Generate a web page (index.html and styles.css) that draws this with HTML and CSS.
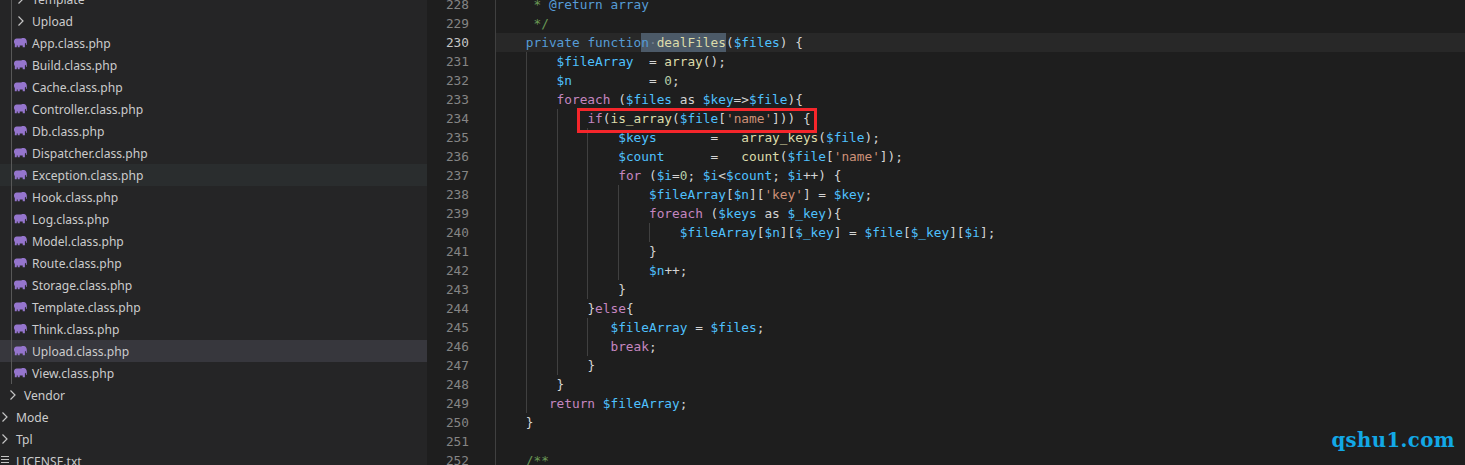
FILE: index.html
```html
<!DOCTYPE html>
<html lang="en">
<head>
<meta charset="utf-8">
<title>Upload.class.php</title>
<link rel="stylesheet" href="styles.css">
</head>
<body>
<svg class="defs" width="0" height="0" aria-hidden="true">
  <symbol id="elephant" viewBox="0 0 13 10">
    <path d="M2.6.4h4.6c.9-.6 2.900-.7 4 0 1 .7 1.600 1.900 1.600 3.300v2.800c0 .5-.8.5-.9 0V4.800l-1 .6v3.900H8.700V7.400H5.700v1.900H3.700V7.400H2.800v1.900H.8V6C.3 5.300-.1 4.300 0 3.200.1 1.600 1.200.4 2.600.4z"/>
  </symbol>
  <symbol id="chev" viewBox="0 0 16 16">
    <path d="M2.500 3.500L7 8l-4.500 4.500" fill="none" stroke="#c5c5c5" stroke-width="1.200"/>
  </symbol>
</svg>
<div class="app">
  <aside class="tree">
    <div class="row d2 guide"><svg class="chev"><use href="#chev"/></svg><span>Template</span></div>
    <div class="row d2 guide"><svg class="chev"><use href="#chev"/></svg><span>Upload</span></div>
    <div class="row file guide"><svg class="php"><use href="#elephant"/></svg><span>App.class.php</span></div>
    <div class="row file guide"><svg class="php"><use href="#elephant"/></svg><span>Build.class.php</span></div>
    <div class="row file guide"><svg class="php"><use href="#elephant"/></svg><span>Cache.class.php</span></div>
    <div class="row file guide"><svg class="php"><use href="#elephant"/></svg><span>Controller.class.php</span></div>
    <div class="row file guide"><svg class="php"><use href="#elephant"/></svg><span>Db.class.php</span></div>
    <div class="row file guide"><svg class="php"><use href="#elephant"/></svg><span>Dispatcher.class.php</span></div>
    <div class="row file guide hover"><svg class="php"><use href="#elephant"/></svg><span>Exception.class.php</span></div>
    <div class="row file guide"><svg class="php"><use href="#elephant"/></svg><span>Hook.class.php</span></div>
    <div class="row file guide"><svg class="php"><use href="#elephant"/></svg><span>Log.class.php</span></div>
    <div class="row file guide"><svg class="php"><use href="#elephant"/></svg><span>Model.class.php</span></div>
    <div class="row file guide"><svg class="php"><use href="#elephant"/></svg><span>Route.class.php</span></div>
    <div class="row file guide"><svg class="php"><use href="#elephant"/></svg><span>Storage.class.php</span></div>
    <div class="row file guide"><svg class="php"><use href="#elephant"/></svg><span>Template.class.php</span></div>
    <div class="row file guide"><svg class="php"><use href="#elephant"/></svg><span>Think.class.php</span></div>
    <div class="row file guide active"><svg class="php"><use href="#elephant"/></svg><span>Upload.class.php</span></div>
    <div class="row file guide"><svg class="php"><use href="#elephant"/></svg><span>View.class.php</span></div>
    <div class="row d1"><svg class="chev"><use href="#chev"/></svg><span>Vendor</span></div>
    <div class="row d0"><svg class="chev"><use href="#chev"/></svg><span>Mode</span></div>
    <div class="row d0"><svg class="chev"><use href="#chev"/></svg><span>Tpl</span></div>
    <div class="row d0"><svg class="txt" viewBox="0 0 16 16"><path d="M1 3.500h8M1 6.500h8M1 9.500h8M1 12.500h6" stroke="#c5c5c5" stroke-width="1"/></svg><span>LICENSE.txt</span></div>
  </aside>
  <main class="editor">
    <div class="line"><span class="num">228</span><span class="code"><i class="g"></i><span class="c"> * </span><span class="k">@return</span> <span class="k">array</span></span></div>
    <div class="line"><span class="num">229</span><span class="code"><i class="g"></i><span class="c"> */</span></span></div>
    <div class="line current"><span class="num">230</span><span class="code"><i class="g"></i><span class="k">private</span> <span class="k">functio</span><span class="sel"><span class="k">n</span><span class="ws">·</span><span class="f">dealFiles</span></span>(<span class="v">$files</span>) {</span></div>
    <div class="line"><span class="num">231</span><span class="code"><i class="g"></i><i class="g"></i><span class="v">$fileArray</span>  = <span class="f">array</span>();</span></div>
    <div class="line"><span class="num">232</span><span class="code"><i class="g"></i><i class="g"></i><span class="v">$n</span>          = <span class="n">0</span>;</span></div>
    <div class="line"><span class="num">233</span><span class="code"><i class="g"></i><i class="g"></i><span class="p">foreach</span> (<span class="v">$files</span> as <span class="v">$key</span>=&gt;<span class="v">$file</span>){</span></div>
    <div class="line"><span class="num">234</span><span class="code"><i class="g"></i><i class="g"></i><i class="g"></i><span class="p">if</span>(<span class="f">is_array</span>(<span class="v">$file</span>[<span class="s">'name'</span>])) {</span></div>
    <div class="line"><span class="num">235</span><span class="code"><i class="g"></i><i class="g"></i><i class="g"></i><i class="g"></i><span class="v">$keys</span>       =   <span class="f">array_keys</span>(<span class="v">$file</span>);</span></div>
    <div class="line"><span class="num">236</span><span class="code"><i class="g"></i><i class="g"></i><i class="g"></i><i class="g"></i><span class="v">$count</span>      =   <span class="f">count</span>(<span class="v">$file</span>[<span class="s">'name'</span>]);</span></div>
    <div class="line"><span class="num">237</span><span class="code"><i class="g"></i><i class="g"></i><i class="g"></i><i class="g"></i><span class="p">for</span> (<span class="v">$i</span>=<span class="n">0</span>; <span class="v">$i</span>&lt;<span class="v">$count</span>; <span class="v">$i</span>++) {</span></div>
    <div class="line"><span class="num">238</span><span class="code"><i class="g"></i><i class="g"></i><i class="g"></i><i class="g"></i><i class="g"></i><span class="v">$fileArray</span>[<span class="v">$n</span>][<span class="s">'key'</span>] = <span class="v">$key</span>;</span></div>
    <div class="line"><span class="num">239</span><span class="code"><i class="g"></i><i class="g"></i><i class="g"></i><i class="g"></i><i class="g"></i><span class="p">foreach</span> (<span class="v">$keys</span> as <span class="v">$_key</span>){</span></div>
    <div class="line"><span class="num">240</span><span class="code"><i class="g"></i><i class="g"></i><i class="g"></i><i class="g"></i><i class="g"></i><i class="g"></i><span class="v">$fileArray</span>[<span class="v">$n</span>][<span class="v">$_key</span>] = <span class="v">$file</span>[<span class="v">$_key</span>][<span class="v">$i</span>];</span></div>
    <div class="line"><span class="num">241</span><span class="code"><i class="g"></i><i class="g"></i><i class="g"></i><i class="g"></i><i class="g"></i>}</span></div>
    <div class="line"><span class="num">242</span><span class="code"><i class="g"></i><i class="g"></i><i class="g"></i><i class="g"></i><i class="g"></i><span class="v">$n</span>++;</span></div>
    <div class="line"><span class="num">243</span><span class="code"><i class="g"></i><i class="g"></i><i class="g"></i><i class="g"></i>}</span></div>
    <div class="line"><span class="num">244</span><span class="code"><i class="g"></i><i class="g"></i><i class="g"></i>}<span class="p">else</span>{</span></div>
    <div class="line"><span class="num">245</span><span class="code"><i class="g"></i><i class="g"></i><i class="g"></i><i class="g short"></i><span class="v">$fileArray</span> = <span class="v">$files</span>;</span></div>
    <div class="line"><span class="num">246</span><span class="code"><i class="g"></i><i class="g"></i><i class="g"></i><i class="g short"></i><span class="p">break</span>;</span></div>
    <div class="line"><span class="num">247</span><span class="code"><i class="g"></i><i class="g"></i><i class="g"></i>}</span></div>
    <div class="line"><span class="num">248</span><span class="code"><i class="g"></i><i class="g"></i>}</span></div>
    <div class="line"><span class="num">249</span><span class="code"><i class="g"></i><i class="g short"></i><span class="p">return</span> <span class="v">$fileArray</span>;</span></div>
    <div class="line"><span class="num">250</span><span class="code"><i class="g"></i>}</span></div>
    <div class="line"><span class="num">251</span><span class="code"><i class="g"></i></span></div>
    <div class="line"><span class="num">252</span><span class="code"><i class="g"></i><span class="c">/**</span></span></div>
    <div class="redbox"></div>
    <div class="mark">qshu1.com</div>
  </main>
</div>
</body>
</html>
```
FILE: styles.css
```css
html, body {
  margin: 0;
  height: 465px;
  overflow: hidden;
  background: #1e1e1e;
}

.defs {
  display: block;
  height: 0;
}

.app {
  display: flex;
  height: 465px;
  overflow: hidden;
}

.tree {
  flex: 0 0 427px;
  background: #252526;
  color: #cccccc;
  font: 12.1px/22px "Noto Sans", sans-serif;
  overflow: hidden;
}

.row {
  display: flex;
  align-items: center;
  height: 22px;
  white-space: nowrap;
}

.row:first-child {
  margin-top: -12px;
}

.row span {
  margin-top: 2px;
}

.guide {
  background-image: linear-gradient(#585858, #585858);
  background-repeat: no-repeat;
  background-size: 1px 100%;
  background-position: 11px 0;
}

.hover {
  background-color: #2a2d2e;
}

.active {
  background-color: #37373d;
}

.d2 { padding-left: 16px; }
.d1 { padding-left: 8px; }
.d0 { padding-left: 0; }
.file { padding-left: 14px; }

.chev, .txt {
  width: 16px;
  height: 16px;
  flex: none;
}

.php {
  width: 13px;
  height: 10px;
  margin-right: 5px;
  flex: none;
  fill: #9575cd;
}

.editor {
  position: relative;
  flex: 1;
  min-width: 0;
  overflow: hidden;
  font: 12.79px/19px "DejaVu Sans Mono", monospace;
  color: #d4d4d4;
}

.line {
  display: flex;
  height: 19px;
  white-space: pre;
}

.line:first-child {
  margin-top: -5px;
}

.num {
  flex: 0 0 42px;
  padding-right: 26px;
  text-align: right;
  color: #858585;
}

.code {
  flex: 1;
  white-space: pre;
}

.current .num {
  color: #c6c6c6;
}

.current .code {
  background: #282828;
}

.g {
  display: inline-block;
  box-sizing: border-box;
  width: 30.8px;
  height: 19px;
  vertical-align: top;
  border-left: 1px solid #404040;
}

.short {
  width: 23.1px;
}

.c { color: #6a9955; }
.k { color: #569cd6; }
.p { color: #c586c0; }
.f { color: #dcdcaa; }
.v { color: #4fc1ff; }
.s { color: #ce9178; }
.n { color: #b5cea8; }

.sel {
  display: inline-block;
  background: #4c5a68;
  height: 19px;
  vertical-align: top;
}

.ws {
  color: #76828e;
}

.redbox {
  position: absolute;
  left: 150px;
  top: 108px;
  width: 240px;
  height: 25px;
  box-sizing: border-box;
  border: 3px solid #f5262b;
}

.mark {
  position: absolute;
  right: 10px;
  top: 427px;
  font: bold 19.7px/28px "DejaVu Serif", serif;
  letter-spacing: 0.4px;
  color: #12a8e6;
}
```
